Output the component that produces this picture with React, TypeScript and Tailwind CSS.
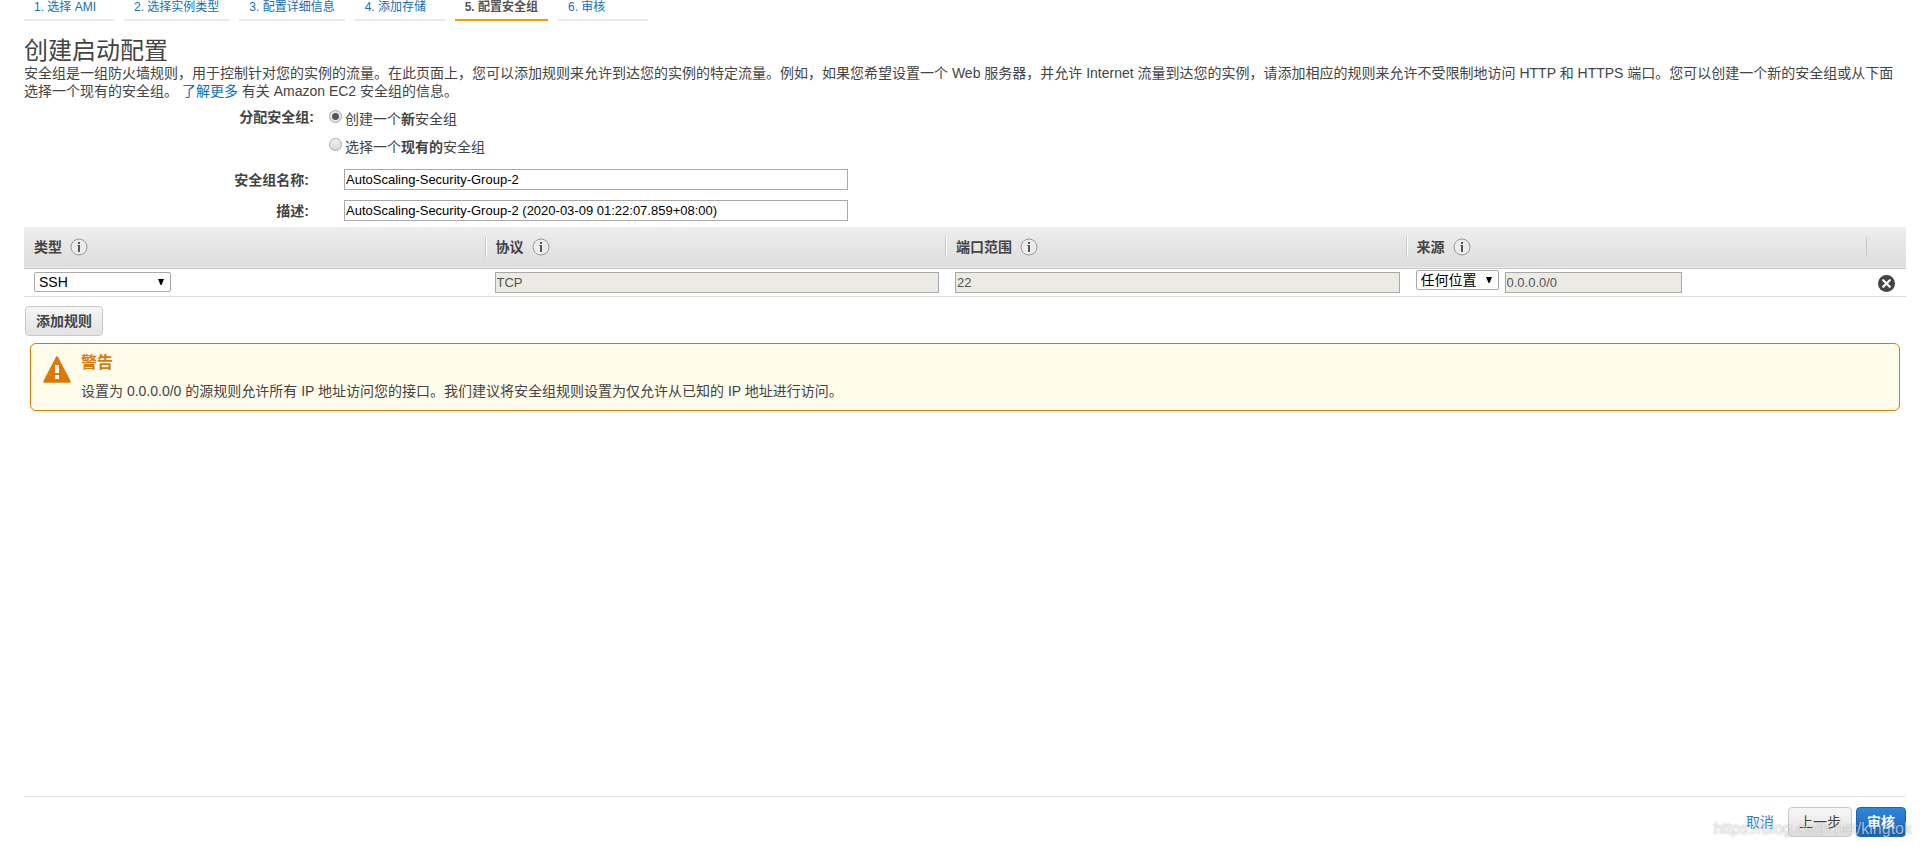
import React, { useState } from "react";

interface Rule {
  id: number;
  type: string;
  protocol: string;
  port: string;
  source: string;
  cidr: string;
}

const steps = ["1. 选择 AMI", "2. 选择实例类型", "3. 配置详细信息", "4. 添加存储", "5. 配置安全组", "6. 审核"];
const columns = ["类型", "协议", "端口范围", "来源"];

const InfoIcon: React.FC = () => (
  <svg width="18" height="18" viewBox="0 0 18 18" fill="none">
    <circle cx="9" cy="9" r="8" fill="#ededed" stroke="#999" />
    <path d="M8 4h2v2h-2zM8 7h2v7h-2z" fill="#555" />
    <path d="M7 7h1v1h-1z" fill="#999" />
  </svg>
);

const RemoveIcon: React.FC = () => (
  <svg width="17" height="17" viewBox="0 0 17 17" fill="none">
    <circle cx="8.5" cy="8.5" r="8.5" fill="#444" />
    <path d="M5.2 5.2l6.6 6.6M11.8 5.2l-6.6 6.6" stroke="#fff" strokeWidth="2.2" strokeLinecap="round" />
  </svg>
);

const WarningIcon: React.FC = () => (
  <svg width="28" height="27" viewBox="0 0 28 27" fill="none">
    <path d="M14 1.5L26.5 25.5H1.5z" fill="#e07700" stroke="#e07700" strokeWidth="2.4" strokeLinejoin="round" />
    <path d="M12 9h4v8h-4zM12 19h4v4h-4z" fill="#fff" />
  </svg>
);

interface SelectBoxProps {
  label: string;
  value: string;
  options: string[];
  className: string;
  onChange: (value: string) => void;
}

const SelectBox: React.FC<SelectBoxProps> = ({ label, value, options, className, onChange }) => (
  <div className={`relative ${className}`}>
    <select
      aria-label={label}
      value={value}
      onChange={(e) => onChange(e.target.value)}
      className="block h-5 w-full appearance-none rounded-xs border border-[#a9a9a9] bg-white pl-1 text-sm leading-4 text-black"
    >
      {options.map((option) => (
        <option key={option}>{option}</option>
      ))}
    </select>
    <svg className="pointer-events-none absolute top-[7px] right-[7px]" width="6" height="6" viewBox="0 0 6 6">
      <path d="M0 0h6L3.5 6h-1z" fill="#000" />
    </svg>
  </div>
);

const radioClass =
  "size-[13px] shrink-0 appearance-none rounded-full border border-[#a8a8a8] bg-linear-to-b from-[#f2f2f2] to-[#d8d8d8] checked:bg-[radial-gradient(circle,#555_0_3px,#e6e6e6_4px)]";
const fieldClass = "block h-[21px] border border-[#a9a9a9] px-px text-[13px] leading-4";
const disabledFieldClass = `${fieldClass} bg-[#ebebe4] text-[#545454]`;
const buttonClass = "h-[30px] rounded border border-[#c8c8c8] bg-linear-to-b from-[#f6f6f6] to-[#e2e2e2] px-[10px]";

const App: React.FC = () => {
  const [mode, setMode] = useState("new");
  const [name, setName] = useState("AutoScaling-Security-Group-2");
  const [description, setDescription] = useState("AutoScaling-Security-Group-2 (2020-03-09 01:22:07.859+08:00)");
  const [rules, setRules] = useState<Rule[]>([
    { id: 1, type: "SSH", protocol: "TCP", port: "22", source: "任何位置", cidr: "0.0.0.0/0" },
  ]);

  const updateRule = (id: number, patch: Partial<Rule>) => {
    setRules(rules.map((rule) => (rule.id === id ? { ...rule, ...patch } : rule)));
  };

  const addRule = () => {
    setRules([...rules, { id: Date.now(), type: "SSH", protocol: "TCP", port: "22", source: "任何位置", cidr: "0.0.0.0/0" }]);
  };

  return (
    <div className="relative flex min-h-screen flex-col bg-white pr-[14px] pl-6 font-['Liberation_Sans','Noto_Sans_CJK_SC',sans-serif] text-sm leading-[18px] text-[#444]">
      <nav className="flex gap-[10px] text-xs">
        {steps.map((step, i) => (
          <a
            key={step}
            href="#"
            className={`h-[21px] min-w-[90px] border-b-2 px-[10px] leading-[14px] ${
              i === 4 ? "border-[#ff9900] font-bold text-[#555]" : "border-[#eaeaea] text-[#146eb4]"
            }`}
          >
            {step}
          </a>
        ))}
      </nav>

      <main className="flex-1">
        <h1 className="pt-4 text-2xl leading-[27px]">创建启动配置</h1>
        <p>
          安全组是一组防火墙规则，用于控制针对您的实例的流量。在此页面上，您可以添加规则来允许到达您的实例的特定流量。例如，如果您希望设置一个 Web 服务器，并允许 Internet 流量到达您的实例，请添加相应的规则来允许不受限制地访问 HTTP 和 HTTPS 端口。您可以创建一个新的安全组或从下面选择一个现有的安全组。{" "}
          <a href="#" className="text-[#146eb4]">了解更多</a> 有关 Amazon EC2 安全组的信息。
        </p>

        <fieldset className="flex pt-2">
          <legend className="float-left w-[290px] text-right font-bold">分配安全组:</legend>
          <div className="flex flex-col gap-[10px] pt-0.5 pl-[15px]">
            <label className="flex gap-[3px]">
              <input type="radio" name="mode" checked={mode === "new"} onChange={() => setMode("new")} className={radioClass} />
              <span>创建一个<b>新</b>安全组</span>
            </label>
            <label className="flex gap-[3px]">
              <input type="radio" name="mode" checked={mode === "existing"} onChange={() => setMode("existing")} className={radioClass} />
              <span>选择一个<b>现有的</b>安全组</span>
            </label>
          </div>
        </fieldset>

        <div className="flex flex-col gap-[10px] pt-[13px] pb-1.5">
          <div className="flex items-center gap-[35px]">
            <label htmlFor="name" className="w-[285px] text-right font-bold">安全组名称:</label>
            <input id="name" value={name} onChange={(e) => setName(e.target.value)} className={`${fieldClass} w-[504px] bg-white text-black`} />
          </div>
          <div className="flex items-center gap-[35px]">
            <label htmlFor="description" className="w-[285px] text-right font-bold">描述:</label>
            <input id="description" value={description} onChange={(e) => setDescription(e.target.value)} className={`${fieldClass} w-[504px] bg-white text-black`} />
          </div>
        </div>

        <table className="w-full table-fixed border-collapse">
          <thead>
            <tr className="h-[41px] border-b border-[#c8c8c8] bg-linear-to-b from-[#eee] to-[#ddd]">
              {columns.map((column, i) => (
                <th key={column} className="p-0 text-left">
                  <div className={`flex h-5 items-center gap-2 pl-[10px] ${i > 0 ? "border-l border-[#c8c8c8] shadow-[inset_1px_0_#fff]" : ""}`}>
                    {column}
                    <InfoIcon />
                  </div>
                </th>
              ))}
              <th className="w-10 p-0">
                <div className="h-5 border-l border-[#c8c8c8]" />
              </th>
            </tr>
          </thead>
          <tbody>
            {rules.map((rule) => (
              <tr key={rule.id} className="h-7 border-b border-[#ddd] align-top">
                <td className="pt-[3px] pl-[10px]">
                  <SelectBox label="类型" value={rule.type} options={["SSH", "HTTP", "HTTPS"]} className="w-[137px]" onChange={(type) => updateRule(rule.id, { type })} />
                </td>
                <td className="pt-[3px] pr-1.5 pl-[10px]">
                  <input aria-label="协议" disabled value={rule.protocol} className={`${disabledFieldClass} w-full`} />
                </td>
                <td className="pt-[3px] pr-1.5 pl-[10px]">
                  <input aria-label="端口范围" disabled value={rule.port} className={`${disabledFieldClass} w-full`} />
                </td>
                <td className="pt-[1px] pl-[10px]">
                  <div className="flex items-start gap-1.5">
                    <SelectBox label="来源" value={rule.source} options={["任何位置", "自定义", "我的 IP"]} className="w-[83px]" onChange={(source) => updateRule(rule.id, { source })} />
                    <div className="pt-0.5">
                      <input aria-label="CIDR" disabled value={rule.cidr} className={`${disabledFieldClass} w-[177px]`} />
                    </div>
                  </div>
                </td>
                <td className="pt-1.5 pl-3">
                  <button aria-label="删除" onClick={() => setRules(rules.filter((r) => r.id !== rule.id))} className="block">
                    <RemoveIcon />
                  </button>
                </td>
              </tr>
            ))}
          </tbody>
        </table>

        <button onClick={addRule} className={`${buttonClass} mt-[9px] ml-px block font-bold`}>
          添加规则
        </button>

        <div role="alert" className="mt-[7px] mr-1.5 ml-1.5 flex gap-[10px] rounded-md border border-[#e07700] bg-[#fffceb] py-[10px] pl-3">
          <div className="pt-0.5">
            <WarningIcon />
          </div>
          <div>
            <h2 className="text-base leading-[18px] font-bold text-[#e07700]">警告</h2>
            <p className="pt-[10px]">设置为 0.0.0.0/0 的源规则允许所有 IP 地址访问您的接口。我们建议将安全组规则设置为仅允许从已知的 IP 地址进行访问。</p>
          </div>
        </div>
      </main>

      <footer className="flex items-center justify-end gap-1 border-t border-[#e6e6e6] py-[10px]">
        <a href="#" className="mr-[10px] text-[#2a7de1]">取消</a>
        <button className={buttonClass}>上一步</button>
        <button className="h-[30px] rounded border border-[#1a66b0] bg-linear-to-b from-[#2f86da] to-[#1a66b5] px-[10px] font-bold text-white">审核</button>
      </footer>
      <span className="pointer-events-none absolute right-2 bottom-1.5 text-base text-white/60 [text-shadow:0_0_2px_rgba(0,0,0,0.3)]">
        https://blog.csdn.net/kingtok
      </span>
    </div>
  );
};

export default App;
